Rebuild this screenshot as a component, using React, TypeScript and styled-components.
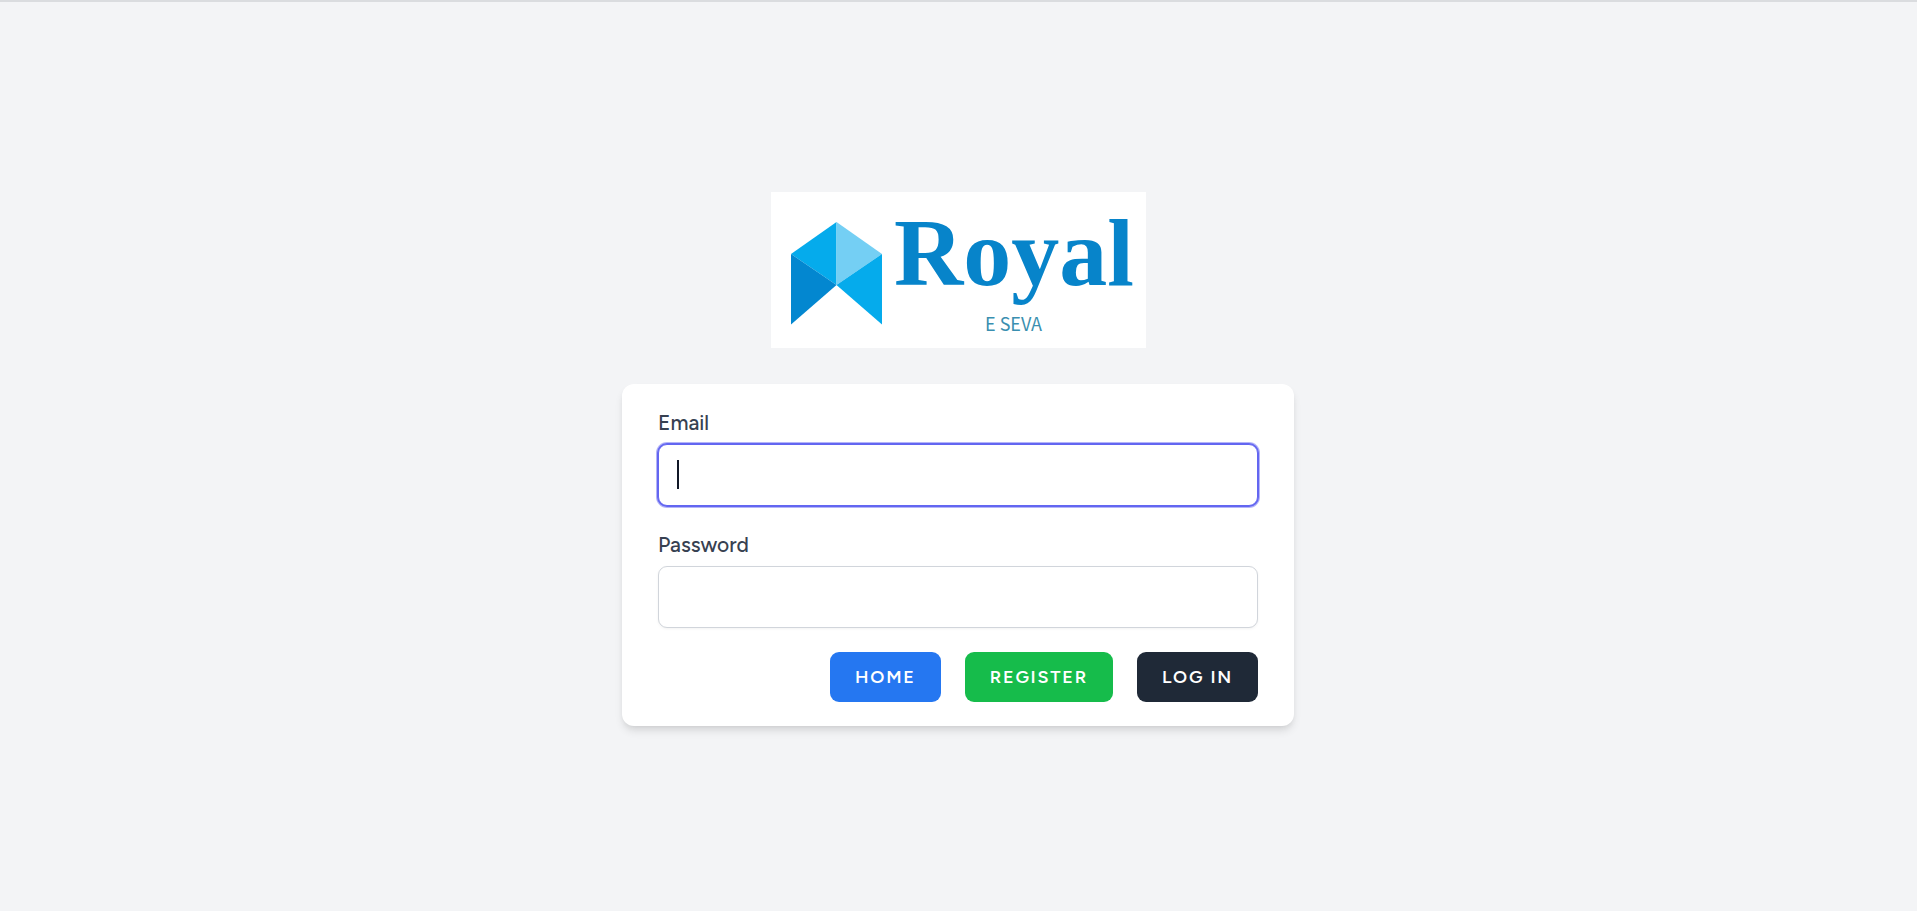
import React from 'react';
import styled, { createGlobalStyle } from 'styled-components';

const GlobalStyle = createGlobalStyle`
  *, *::before, *::after { box-sizing: border-box; }
  body {
    margin: 0;
    background: #f3f4f6;
    color: #111827;
    font-family: Figtree, Lato, "Open Sans", sans-serif;
  }
`;

const Page = styled.main`
  min-height: 100vh;
  display: flex;
  flex-direction: column;
  align-items: center;
  justify-content: center;
  gap: 36px;
  padding: 5px 1px 0 0;
  border-top: 2px solid #dadcdf;
`;

const LogoLink = styled.a`
  display: block;
  width: 375px;
  max-width: 100%;
  background: #fff;
`;

const LogoArt = styled.svg`
  display: block;
  width: 100%;
`;

const Card = styled.form`
  width: 100%;
  max-width: 672px;
  padding: 24px 36px;
  display: flex;
  flex-direction: column;
  gap: 24px;
  background: #fff;
  border-radius: 12px;
  box-shadow: 0 6px 9px -1px rgba(0, 0, 0, 0.1), 0 3px 6px -3px rgba(0, 0, 0, 0.1);
`;

const Field = styled.div`
  display: flex;
  flex-direction: column;
  gap: 6px;
`;

const Label = styled.label`
  font-size: 21px;
  font-weight: 500;
  line-height: 30px;
  color: #374151;
`;

const InputWrap = styled.div`
  position: relative;
  display: flex;
`;

const Input = styled.input`
  width: 100%;
  height: 62px;
  padding: 12px 18px;
  font: inherit;
  font-size: 24px;
  line-height: 36px;
  color: #111827;
  background: #fff;
  border: 1px solid #d1d5db;
  border-radius: 9px;
  outline: none;
  box-shadow: 0 1px 3px rgba(0, 0, 0, 0.05);

  &:focus {
    border-color: #6366f1;
    box-shadow: 0 0 0 1px #6366f1, 0 0 0 2px #b4b5f8;
  }

  &:placeholder-shown {
    caret-color: transparent;
  }
`;

/* Steady caret shown while the focused field is still empty. */
const Caret = styled.span`
  display: none;
  position: absolute;
  top: 16px;
  left: 19px;
  width: 2px;
  height: 29px;
  background: #111827;
  pointer-events: none;

  ${Input}:focus:placeholder-shown + & {
    display: block;
  }
`;

const Actions = styled.div`
  display: flex;
  flex-wrap: wrap;
  justify-content: flex-end;
  gap: 24px;
`;

const Button = styled.button<{ $color: string }>`
  height: 50px;
  padding: 0 25px;
  font: inherit;
  font-size: 18px;
  font-weight: 600;
  line-height: 24px;
  letter-spacing: 0.1em;
  text-transform: uppercase;
  color: #fff;
  background: ${(p) => p.$color};
  border: 0;
  border-radius: 9px;
  cursor: pointer;
`;

function Logo() {
  return (
    <LogoArt viewBox="0 0 375 156" role="img" aria-label="Royal E Seva">
      <path d="M65.500 30L20 62L65.500 93Z" fill="#05abec" />
      <path d="M65.500 30L111 62L65.500 93Z" fill="#74cff4" />
      <path d="M20 62L65.500 93L20 132.500Z" fill="#0387d0" />
      <path d="M111 62L65.500 93L111 132.500Z" fill="#05abec" />
      <text x="123" y="93" fontFamily="'Liberation Serif', serif" fontWeight="700" fontSize="96" fill="#0784ca">Royal</text>
      <text x="214" y="139" fontFamily="'Noto Sans CJK SC', 'Noto Sans', sans-serif" fontSize="18" fill="#3a8fb0">E SEVA</text>
    </LogoArt>
  );
}

function TextField({ label, ...input }: { label: string } & React.ComponentProps<'input'>) {
  return (
    <Field>
      <Label htmlFor={input.id}>{label}</Label>
      <InputWrap>
        <Input placeholder=" " {...input} />
        <Caret aria-hidden="true" />
      </InputWrap>
    </Field>
  );
}

export default function App() {
  return (
    <>
      <GlobalStyle />
      <Page>
        <LogoLink href="/"><Logo /></LogoLink>
        <Card onSubmit={(e) => e.preventDefault()}>
          <TextField label="Email" id="email" type="email" name="email" autoComplete="username" autoFocus />
          <TextField label="Password" id="password" type="password" name="password" autoComplete="current-password" />
          <Actions>
            <Button type="button" $color="#2577f1">Home</Button>
            <Button type="button" $color="#16bc4b">Register</Button>
            <Button type="submit" $color="#1f2937">Log in</Button>
          </Actions>
        </Card>
      </Page>
    </>
  );
}
